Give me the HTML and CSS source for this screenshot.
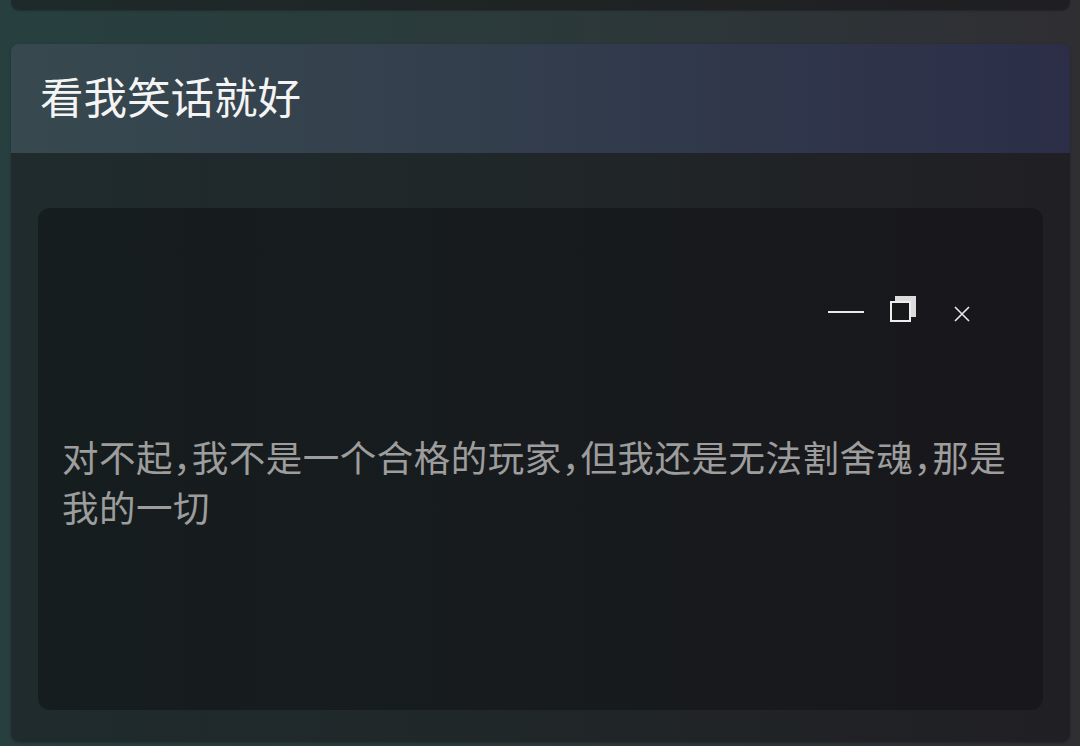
FILE: index.html
```html
<!DOCTYPE html>
<html lang="zh-CN">
<head>
    <meta charset="UTF-8">
    <meta name="viewport" content="width=device-width, initial-scale=1.0">
    <title>看我笑话就好</title>
    <link rel="stylesheet" href="styles.css">
</head>
<body>
    <!-- previous card, scrolled almost out of view -->
    <div class="card-tail"></div>

    <div class="card">
        <div class="card-header">
            <h2>看我笑话就好</h2>
        </div>
        <div class="card-body">
            <div class="panel">
                <div class="win-controls">
                    <span class="ctl ctl-min"></span>
                    <span class="ctl ctl-max"><span class="back"></span><span class="front"></span></span>
                    <svg class="ctl ctl-close" width="16" height="16" viewBox="0 0 16 16">
                        <path d="M1 1 L15 15 M15 1 L1 15" stroke="#e8e8e8" stroke-width="1.6" fill="none"/>
                    </svg>
                </div>
                <p class="message">对不起，我不是一个合格的玩家，但我还是无法割舍魂，那是我的一切</p>
            </div>
        </div>
    </div>
</body>
</html>
```

FILE: styles.css
```css
html, body {
    height: 100%;
}

body {
    margin: 0;
    padding: 0 10px 0 11px;
    font-family: 'Noto Sans CJK SC', 'Noto Sans', sans-serif;
    background: linear-gradient(90deg, #27403f 0%, #2b3a3b 45%, #2f2e33 100%);
    overflow: hidden;
}

.card-tail {
    height: 10px;
    margin-bottom: 34px;
    border-radius: 0 0 8px 8px;
    background: linear-gradient(90deg, #1e2a2a 0%, #1f2324 50%, #1f1e22 100%);
    box-shadow: 0 1px 2px rgba(0, 0, 0, 0.25);
}

.card {
    border-radius: 8px;
    overflow: hidden;
    box-shadow: 0 1px 3px rgba(0, 0, 0, 0.25);
}

.card-header {
    height: 109px;
    display: flex;
    align-items: center;
    padding-left: 29px;
    background: linear-gradient(90deg, #37494f 0%, #333e4d 45%, #2c2e48 100%);
}

.card-header h2 {
    margin: 0;
    font-size: 43.5px;
    font-weight: 400;
    color: #f4f4f4;
    line-height: 1;
    padding-bottom: 6px;
}

.card-body {
    padding: 55px 27px 32px;
    background: linear-gradient(90deg, #1f2b2d 0%, #202729 45%, #201f24 100%);
}

.panel {
    height: 502px;
    box-sizing: border-box;
    padding: 88px 24px 0;
    border-radius: 12px;
    background: linear-gradient(90deg, #161d1f 0%, #171b1d 50%, #18171b 100%);
}

.win-controls {
    display: flex;
    align-items: center;
    justify-content: flex-end;
    height: 26px;
    padding-right: 49px;
}

.ctl-min {
    width: 36px;
    height: 2px;
    background: #e8e8e8;
    margin-top: 6px;
}

.ctl-max {
    position: relative;
    width: 26px;
    height: 26px;
    margin-left: 26px;
}

.ctl-max .back {
    position: absolute;
    left: 5px;
    top: 0;
    width: 21px;
    height: 21px;
    background: #dcdcdc;
}

.ctl-max .front {
    position: absolute;
    left: 0;
    top: 5px;
    width: 17px;
    height: 17px;
    border: 2px solid #eeeeee;
    background: #17191b;
}

.ctl-close {
    margin-left: 38px;
    margin-top: 10px;
}

.message {
    margin: 110px 0 0;
    font-size: 36.5px;
    line-height: 50px;
    letter-spacing: 0.5px;
    font-feature-settings: "halt";
    color: #9d9d9d;
}
```
